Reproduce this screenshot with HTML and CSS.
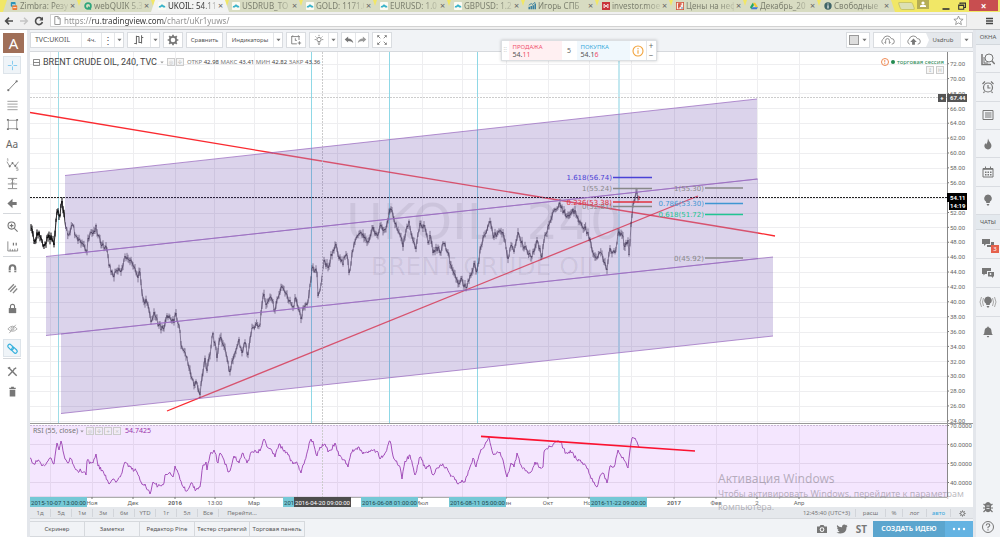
FILE: index.html
```html
<!DOCTYPE html>
<html lang="ru">
<head>
<meta charset="utf-8">
<title>UKOIL: 54.11</title>
<link rel="stylesheet" href="styles.css">
</head>
<body>
<svg class="defs" aria-hidden="true">
  <symbol id="cloud" viewBox="0 0 10 10"><rect width="10" height="10" rx="1" fill="#fbfbf3"/><path d="M1 7a2 2 0 0 1 2-2.4A2.2 2.2 0 0 1 7 4.300a2 2 0 0 1 2 2.700H6.500L5 5.500 3.500 7z" fill="#37b2c9"/></symbol>
  <symbol id="caret" viewBox="0 0 6 4"><path d="M.5.5h5L3 3.500z" fill="#777"/></symbol>
  <symbol id="bulb" viewBox="0 0 14 14"><path d="M7 1.500a3.800 3.800 0 0 1 2 7L8.700 10H5.300L5 8.500a3.800 3.800 0 0 1 2-7zM5.600 11h2.800l-.6 1.600H6.200z"/></symbol>
  <symbol id="gear" viewBox="0 0 14 14"><circle cx="7" cy="7" r="3.700" fill="none" stroke="currentColor" stroke-width="2"/><path d="M7 .8v2.400M7 10.800v2.400M.8 7h2.400M10.800 7h2.400M2.600 2.600l1.700 1.700M9.700 9.700l1.700 1.700M2.600 11.400l1.700-1.700M9.700 4.300l1.700-1.700" stroke="currentColor" stroke-width="2"/></symbol>
  <symbol id="chat" viewBox="0 0 14 14"><path d="M1 2h8v5H5L3 9V7H1z"/><path d="M10 5h3v5h-1v2l-2-2H6V8h4z"/></symbol>
</svg>

<header class="browser">
  <nav class="tabs">
    <a class="tab" href="#"><svg class="fav" viewBox="0 0 10 10"><rect width="6" height="6" x="1" rx="1" fill="#2b94b8"/><rect width="6" height="6" x="3" y="4" rx="1" fill="#ee7a33"/><path d="M2.500 3.500h4M4 7h4" stroke="#fff"/></svg><span class="name">Zimbra: Резу</span><span class="x">×</span></a>
    <a class="tab" href="#"><svg class="fav" viewBox="0 0 10 10"><circle cx="5" cy="5" r="3.600" fill="none" stroke="#2fa57c" stroke-width="2.200"/><path d="M5 6l3.500 3.500" stroke="#2fa57c" stroke-width="2"/></svg><span class="name">webQUIK 5.3</span><span class="x">×</span></a>
    <a class="tab on" href="#"><svg class="fav"><use href="#cloud"/></svg><span class="name">UKOIL: 54.11</span><span class="x">×</span></a>
    <a class="tab" href="#"><svg class="fav"><use href="#cloud"/></svg><span class="name">USDRUB_TO</span><span class="x">×</span></a>
    <a class="tab" href="#"><svg class="fav"><use href="#cloud"/></svg><span class="name">GOLD: 1171.0</span><span class="x">×</span></a>
    <a class="tab" href="#"><svg class="fav"><use href="#cloud"/></svg><span class="name">EURUSD: 1.0</span><span class="x">×</span></a>
    <a class="tab" href="#"><svg class="fav"><use href="#cloud"/></svg><span class="name">GBPUSD: 1.2</span><span class="x">×</span></a>
    <a class="tab" href="#"><svg class="fav" viewBox="0 0 10 10"><path d="M1.500 9V6M4 9V5M6.500 9V4M9 9V2" stroke="#24729a" stroke-width="1.700"/><path d="M1 4l3-2 2 1 3-3" stroke="#24729a" fill="none"/></svg><span class="name">Игорь СПБ</span><span class="x">×</span></a>
    <a class="tab" href="#"><svg class="fav" viewBox="0 0 10 10"><rect width="10" height="10" fill="#c93538"/><path d="M2.500 2.500v5M7.500 2.500v5M2.500 3l5 4M7.500 3l-5 4" stroke="#fff"/></svg><span class="name">investor.moe</span><span class="x">×</span></a>
    <a class="tab" href="#"><svg class="fav" viewBox="0 0 10 10"><rect x=".5" y=".5" width="9" height="9" fill="#f8eee6" stroke="#d2563c"/><path d="M3.500 8V2.500H7M3.500 5H6" stroke="#d2402c" stroke-width="1.600" fill="none"/><circle cx="7.500" cy="7.500" r="1" fill="#3978b5"/></svg><span class="name">Цены на неф</span><span class="x">×</span></a>
    <a class="tab" href="#"><svg class="fav" viewBox="0 0 10 10"><path d="M3.500 1h3L10 6.500H7z" fill="#f4c832"/><path d="M3.500 1L5 3.700 1.600 9 0 6.500z" fill="#22a565"/><path d="M3.200 6.500H10L8.400 9H1.600z" fill="#3f78d8"/></svg><span class="name">Декабрь_20</span><span class="x">×</span></a>
    <a class="tab" href="#"><svg class="fav" viewBox="0 0 10 10"><circle cx="5" cy="5" r="4.600" fill="#3f6468"/><path d="M5 4v4M5 2v1.200" stroke="#fff" stroke-width="1.400"/></svg><span class="name">Свободные</span><span class="x">×</span></a>
    <button class="newtab" aria-label="Новая вкладка"></button>
    <div class="win">
      <button class="user" aria-label="Профиль"><svg viewBox="0 0 12 9"><circle cx="6" cy="3" r="1.600" fill="#fff"/><path d="M3 7V5.500q3-1.500 6 0V7z" fill="#fff"/></svg></button>
      <button aria-label="Свернуть"><svg viewBox="0 0 8 10"><path d="M.5 8h7" stroke="#333" stroke-width="1.600"/></svg></button>
      <button aria-label="Развернуть"><svg viewBox="0 0 8 10"><path d="M2 3V2h5.500v4.500H6M.7 4h5v4.200h-5zM.7 4.500h5M2 2.300h5.500" stroke="#333" fill="none" stroke-width="1.100"/></svg></button>
      <button class="close" aria-label="Закрыть">×</button>
    </div>
  </nav>
  <div class="bar">
    <button aria-label="Назад"><svg viewBox="0 0 10 10"><path d="M9 5H2M5 1.700L1.700 5 5 8.300" fill="none" stroke="#4c4c4c" stroke-width="1.700"/></svg></button>
    <button aria-label="Вперёд"><svg viewBox="0 0 10 10"><path d="M1 5h7M5 1.700L8.300 5 5 8.300" fill="none" stroke="#c4c4c4" stroke-width="1.500"/></svg></button>
    <button aria-label="Обновить"><svg viewBox="0 0 10 10"><path d="M8 3.200A3.500 3.500 0 1 0 8.400 6" fill="none" stroke="#4c4c4c" stroke-width="1.600"/><path d="M9 .8v3.700H5.300z" fill="#4c4c4c"/></svg></button>
    <label class="omni"><svg viewBox="0 0 7 9"><path d="M.8.5h3.400l2 2v6H.8zM4 .5v2.300h2.200" fill="none" stroke="#999"/></svg><input class="url" aria-label="Адрес" value="https://ru.tradingview.com/chart/uKr1yuws/"><svg class="star" viewBox="0 0 11 11"><path d="M5.500 1l1.300 3 3.300.3-2.500 2.100.8 3.200-2.900-1.700-2.900 1.700.8-3.200L.9 4.300 4.200 4z" fill="none" stroke="#888" stroke-width=".8"/></svg></label>
    <button class="menu" aria-label="Меню"><svg viewBox="0 0 8 8"><path d="M0 1.500h7M0 4h7M0 6.500h7" stroke="#444" stroke-width="1.600"/></svg></button>
  </div>
</header>

<div class="app">
  <aside class="left">
    <button class="logo">A</button>
    <button class="tool act"><svg viewBox="0 0 14 14"><path d="M7 2v4M7 8v4M2 7h4M8 7h4" stroke="#7cc7ee"/></svg></button>
    <div class="set seven">
      <button class="tool"><svg viewBox="0 0 14 14"><path d="M3 11.500l8-8.500" stroke="#777"/><circle cx="2.500" cy="12" r="1.200"/><circle cx="11.500" cy="2.500" r="1.200"/></svg></button>
      <button class="tool"><svg viewBox="0 0 14 14"><path d="M1.500 2.500h11M1.500 5.500h11M1.500 8.500h11M1.500 11.500h11" stroke="#999"/></svg></button>
      <button class="tool"><svg viewBox="0 0 14 14"><path d="M2.500 2.500h9v9h-9z" fill="none" stroke="#999"/><path d="M1 1h2v2H1zM11 1h2v2h-2zM1 11h2v2H1zM11 11h2v2h-2z"/></svg></button>
      <button class="tool aa">Aa</button>
      <button class="tool"><svg viewBox="0 0 14 14"><path d="M1 4l3 5 3-3.500 3 3L13.500 4" fill="none" stroke="#777" stroke-width=".8"/><path d="M1 1.200l1-.5V3.500M13 10h-2v1.500h2v1.800h-2" fill="none" stroke="#888" stroke-width=".7"/><circle cx="4" cy="9" r="1.100"/><circle cx="7" cy="5.500" r="1.100"/><circle cx="10" cy="8.500" r="1.100"/></svg></button>
      <button class="tool"><svg viewBox="0 0 14 14"><path d="M2 1.500h10M2 7.500h10M2 12.500h10M7 2v10M5.500 3.500L7 2l1.500 1.500M5.500 6L7 7.500 8.500 6" fill="none" stroke="#888"/></svg></button>
      <button class="tool"><svg viewBox="0 0 14 14"><path d="M1.500 7L7 1.800V5.400h4.500v3.200H7v3.600z"/></svg></button>
    </div>
    <div class="set two">
      <button class="tool"><svg viewBox="0 0 14 14"><circle cx="6" cy="6" r="3.800" fill="none" stroke="#777" stroke-width="1.200"/><path d="M9 9l3.500 3.500M4 6h4M6 4v4" stroke="#777" stroke-width="1.200"/></svg></button>
      <button class="tool"><svg viewBox="0 0 14 14"><path d="M2 1.500v10.300h10.500V9M4.500 12V9.500M7 12v-2M9.500 12V9.500" fill="none" stroke="#888"/><path d="M8 3v3M11 3v3" stroke="#777" stroke-width="1.300"/></svg></button>
    </div>
    <div class="set five">
      <button class="tool"><svg viewBox="0 0 14 14"><path d="M4 11V6.500a3 3 0 0 1 6 0V11" fill="none" stroke="#777" stroke-width="2.200"/><path d="M2.500 9.300h3M8.500 9.300h3" stroke="#fff" stroke-width=".7"/></svg></button>
      <button class="tool"><svg viewBox="0 0 14 14"><path d="M2.500 8.500l6-6M4.500 10.500l6-6.500M7.500 12l4.500-5" stroke="#888" stroke-width="1.500"/></svg></button>
      <button class="tool"><svg viewBox="0 0 14 14"><path d="M3 6.500h8V12H3z"/><path d="M4.800 6.500V4.700a2.200 2.200 0 0 1 4.400 0v1.800" fill="none" stroke="#777" stroke-width="1.200"/></svg></button>
      <button class="tool"><svg viewBox="0 0 14 14"><path d="M2 7.500q5-6 10 0-5 5-10 0zM3.500 12l7-9" fill="none" stroke="#aaa"/><circle cx="7" cy="7.200" r="1.600" fill="none" stroke="#aaa"/></svg></button>
      <button class="tool act"><svg viewBox="0 0 14 14"><rect x="1.500" y="3.500" width="7" height="4" rx="2" transform="rotate(45 5 5.500)" fill="none" stroke="#35b1dd" stroke-width="1.300"/><rect x="5.500" y="7" width="7" height="4" rx="2" transform="rotate(45 9 9)" fill="none" stroke="#35b1dd" stroke-width="1.300"/></svg></button>
    </div>
    <div class="set two last">
      <button class="tool"><svg viewBox="0 0 14 14"><path d="M3 3l8.500 8.500M2.500 11.500l6-6M8 5l3-2M2 3.500l2.500-1" stroke="#777" stroke-width="1.500"/></svg></button>
      <button class="tool"><svg viewBox="0 0 14 14"><path d="M4 5h6v7.500H4zM3.500 3h2V2h3v1h2v1.300h-7z"/></svg></button>
    </div>
  </aside>

  <main class="center">
    <div class="top">
      <div class="grp sym"><button class="w-sym">TVC:UKOIL</button><button class="w-int">4ч.</button><button class="w-dots">⋮</button><button class="w-car"><svg class="car"><use href="#caret"/></svg></button></div>
      <div class="grp"><button class="w-bars"><svg viewBox="0 0 14 14"><path d="M4 2v10M4 11H1.500M4 3h3M10 1.500V11M10 4h2M7 3v7h3" fill="none" stroke="#666" stroke-width="1.200"/></svg></button><button class="w-car"><svg class="car"><use href="#caret"/></svg></button></div>
      <div class="grp"><button class="w-ico"><svg class="g"><use href="#gear"/></svg></button></div>
      <div class="grp"><button class="w-cmp">Сравнить</button></div>
      <div class="grp"><button class="w-ind">Индикаторы</button><button class="w-car"><svg class="car"><use href="#caret"/></svg></button></div>
      <div class="grp"><button class="w-ico"><svg viewBox="0 0 14 14"><path d="M10.500 7V3H2v8.500h6M1.500 3.500l2-2M9.500 1.500l2 2M6.200 5v2.500H8M11 8.500v4M9 10.500h4" fill="none" stroke="#777"/></svg></button></div>
      <div class="grp"><button class="w-ico"><svg viewBox="0 0 14 14"><circle cx="7" cy="6.500" r="2.500" fill="none" stroke="#777"/><path d="M5.500 10.500h3M6 12h2M7 1v1.500M2 6.500h1.300M10.700 6.500H12M3 3l1 1M11 3l-1 1" stroke="#777"/></svg></button><button class="w-car"><svg class="car"><use href="#caret"/></svg></button></div>
      <div class="grp"><button class="w-undo"><svg viewBox="0 0 14 14"><path d="M2 6.500L6 3v2.300q5 .2 6 5.200-2-2.500-6-2.400V10z"/></svg></button><button class="w-undo"><svg viewBox="0 0 14 14"><path d="M12 6.500L8 3v2.300q-5 .2-6 5.200 2-2.500 6-2.400V10z" fill="#999"/></svg></button></div>
      <div class="grp"><button class="w-ico"><svg viewBox="0 0 14 14"><path d="M1.500 4.500v-3h3zM9.500 1.500h3v3zM1.500 9.500v3h3zM12.500 9.500v3h-3z"/><path d="M2 2l3 3M12 2L9 5M2 12l3-3M12 12L9 9" stroke="#777"/></svg></button></div>
      <span class="fill"></span>
      <div class="grp"><button class="w-box"><svg class="sq" viewBox="0 0 10 10"><rect x=".5" y=".5" width="9" height="9" fill="#ddd" stroke="#999"/></svg><svg class="car"><use href="#caret"/></svg></button></div>
      <div class="grp">
        <button class="w-cl"><svg class="cl" viewBox="0 0 16 12"><path d="M4 10.500A3 3 0 0 1 3.500 5 4.500 4.500 0 0 1 12 4.500a3 3 0 0 1 .5 6M6 9.500V6.500M10 9.500V6.500M6 6.500a2 2 0 0 1 4 0M4.800 8.500L6 9.800M11.200 8.500L10 9.800" fill="none" stroke="#888"/></svg></button>
        <button class="w-cl"><svg class="cl" viewBox="0 0 16 12"><path d="M4 10.500A3 3 0 0 1 3.500 5 4.500 4.500 0 0 1 12 4.500a3 3 0 0 1 .5 6" fill="none" stroke="#888"/><path d="M8 4.500l3.500 3.500H9.500v3h-3V8h-2z"/></svg></button>
        <button class="w-usd"><span>Usdrub</span></button><button class="w-cr"><svg class="car"><use href="#caret"/></svg></button>
      </div>
    </div>

    <section class="chart">
      <svg id="plot" viewBox="30 52 943 455" role="img" aria-label="BRENT CRUDE OIL, 240"></svg>
      <div class="legend"><svg viewBox="0 0 8 8"><path d="M.5.500h7v7h-7zM.5 4h7" fill="none" stroke="#777"/></svg><h1>BRENT CRUDE OIL, 240, TVC</h1><svg class="car"><use href="#caret"/></svg><i class="mini">◎</i><i class="mini">✣</i>
        <p>ОТКР <b>42.98</b> МАКС <b>43.41</b> МИН <b>42.82</b> ЗАКР <b>43.36</b></p></div>
      <div class="session"><p><i class="warn">!</i><i class="dot"></i>торговая сессия</p><div><i class="mini">↕</i><i class="mini">H</i></div></div>
      <div class="legend rsi"><span>RSI (55, close)</span><svg class="car"><use href="#caret"/></svg><i class="mini">◎</i><i class="mini">✣</i><i class="mini">+</i><i class="mini">×</i><em>54.7425</em></div>
      <div class="trade">
        <span class="grip">⠿</span>
        <button class="sell">ПРОДАЖА<span>54.<b>11</b></span></button>
        <span class="spread">5</span>
        <button class="buy">ПОКУПКА<span>54.1<b>6</b></span></button>
        <span class="info"><svg viewBox="0 0 12 12"><circle cx="6" cy="6" r="5" fill="none" stroke="#f2a33c" stroke-width="1.100"/><path d="M6 5.300v3.500M6 3v1.200" stroke="#f2a33c" stroke-width="1.100"/></svg></span>
        <span class="step"><button>+</button><button>−</button></span>
      </div>
      <div class="activate"><h2>Активация Windows</h2><p>Чтобы активировать Windows, перейдите к параметрам компьютера.</p></div>
    </section>

    <div class="ranges">
      <button>1д</button><button>5д</button><button>1м</button><button>3м</button><button>6м</button><button>YTD</button><button>1г</button><button>5л</button><button>Все</button><button class="go">Перейти...</button>
      <span class="fill"></span>
      <button class="clock">12:45:40 (UTC+3)</button><button class="mid">расш</button><button class="pc">%</button><button class="log">лог</button><button class="log auto">авто</button><button class="log"><svg><use href="#gear"/></svg></button>
    </div>

    <footer class="bottom">
      <button>Скринер</button><button>Заметки</button><button>Редактор Pine</button><button>Тестер стратегий</button><button>Торговая панель</button>
      <span class="fill"></span>
      <a href="#" aria-label="Снимок"><svg viewBox="0 0 12 12"><path d="M1 3.500h2.500L4.500 2h3l1 1.500H11V10H1z"/><circle cx="6" cy="6.600" r="2.300" fill="#fff"/><circle cx="6" cy="6.600" r="1.300"/></svg></a>
      <a href="#" aria-label="Twitter"><svg viewBox="0 0 12 12"><path d="M1 2q2.200 2.300 5 2.200Q6 1.500 8.300 1.500q1 0 1.600.7L11.300 1.800l-.8 1.200L11.700 3l-1.100 1.100Q10.500 10.500 4.500 10.500 2 10.500.5 9.500q2 0 3.200-1Q2 8.200 1.700 7h1Q1 6.300 1 4.600l1 .3Q.3 3.500 1 2z"/></svg></a>
      <a class="st" href="#">ST</a>
      <button class="idea">СОЗДАТЬ ИДЕЮ</button><button class="more" aria-label="Ещё"><svg viewBox="0 0 14 4"><circle cx="2" cy="2" r="1.200"/><circle cx="7" cy="2" r="1.200"/><circle cx="12" cy="2" r="1.200"/></svg></button>
    </footer>
  </main>

  <aside class="right">
    <h3>ОКНА</h3>
    <div class="set six">
      <button class="tool"><svg viewBox="0 0 14 14"><path d="M1 2v10.500h9" fill="none" stroke="#777" stroke-width="1.500"/><path d="M3 5v6h4" fill="none" stroke="#777"/><circle cx="8" cy="6" r="4" fill="#f4f6f8" stroke="#777"/><path d="M11 9l2.700 3" stroke="#777" stroke-width="1.400"/></svg></button>
      <button class="tool"><svg viewBox="0 0 14 14"><circle cx="7" cy="7.500" r="4.500" fill="none" stroke="#777" stroke-width="1.200"/><path d="M7 5v3h2.500M1.500 4l2.500-2.500M12.500 4L10 1.500M3.500 11.500l-1 1.500M10.500 11.500l1 1.500" fill="none" stroke="#777" stroke-width="1.200"/></svg></button>
      <button class="tool"><svg viewBox="0 0 14 14"><path d="M2 2.500h10v9H2z" fill="none" stroke="#777"/><path d="M4 5h6.500M4 7h6.500M4 9h6.500" stroke="#777"/></svg></button>
      <button class="tool"><svg viewBox="0 0 14 14"><path d="M7 1.500q.5 2 2.500 4.500 2 3-.2 5.500-2.600 2-5-.2Q2.300 9 4.500 6l.6 1.500Q7 5 7 1.500z"/></svg></button>
      <button class="tool"><svg viewBox="0 0 14 14"><path d="M2 3.500h10v8.500H2z" fill="none" stroke="#777"/><path d="M2 4h10" stroke="#777" stroke-width="1.600"/><path d="M4 7.200h6.500M4 9.700h6.500" stroke="#777" stroke-width="1.600" stroke-dasharray="1.500 1"/><path d="M4.500 1.500v2M9.500 1.500v2" stroke="#777"/></svg></button>
      <button class="tool"><svg><use href="#bulb"/></svg></button>
    </div>
    <h3>ЧАТЫ</h3>
    <div class="set four">
      <button class="tool badge"><svg><use href="#chat"/></svg><b>3</b></button>
      <button class="tool"><svg viewBox="0 0 14 14"><path d="M1 2h9v3H6v3H4L2.500 9.500V8H1z"/><path d="M7 6h6v4.500h-1V12l-1.600-1.500H7z"/><circle cx="9.500" cy="8" r=".9" fill="#f1f3f6"/></svg></button>
      <button class="tool"><svg class="wide" viewBox="-3 0 20 14"><use href="#bulb" width="14" height="14"/><path d="M2.500 3q-2 4 0 8M.5 2q-3 5 0 10M11.500 3q2 4 0 8M13.500 2q3 5 0 10" fill="none" stroke="#aaa"/></svg></button>
      <button class="tool"><svg viewBox="0 0 14 14"><path d="M7 1.500q.8 0 .8 1 2.700.7 2.700 4 0 2.500 1.500 3.500H2q1.500-1 1.500-3.500 0-3.300 2.700-4 0-1 .8-1zM5.800 11h2.400q-.2 1.400-1.200 1.400T5.800 11z"/></svg></button>
    </div>
    <span class="fill"></span>
    <div class="set help">
      <button class="tool"><svg viewBox="0 0 14 14"><path d="M4 4q3-4 6 0v6.500q-3 3.500-6 0z"/><path d="M2.500 4l2 1.500M11.500 4l-2 1.500M2 8h10M2.500 12l2-2M11.500 12l-2-2" stroke="#777" stroke-width="1.200"/><path d="M5.500 6h3M5.500 8.500h3" stroke="#f1f3f6" stroke-width=".8"/></svg></button>
      <button class="tool"><svg viewBox="0 0 14 14"><circle cx="7" cy="7" r="5.500" fill="none" stroke="#777"/><path d="M5.200 5.500q.2-1.700 1.800-1.700 1.800 0 1.800 1.500Q8.800 6.300 7 7.200v1M7 9.200v1.200" fill="none" stroke="#777" stroke-width="1.100"/></svg></button>
    </div>
  </aside>
</div>
<script src="chart.js"></script>
</body>
</html>
```
FILE: styles.css
```css
* { box-sizing: border-box; }
html, body { height: 100%; }
body { margin: 0; display: flex; flex-direction: column; background: #f1f3f6; color: #666; font: 6px/8px "Noto Sans", "Open Sans", sans-serif; }
button, input { font: inherit; color: inherit; background: none; border: 0; padding: 0; margin: 0; }
a { color: inherit; text-decoration: none; }
h1, h2, h3, p { margin: 0; font-weight: 400; }
i, em { font-style: normal; }
svg { display: block; fill: #777; }
button { display: flex; align-items: center; justify-content: center; white-space: nowrap; }
.defs { position: absolute; width: 0; height: 0; }
.fill { flex: 1; }
.car { width: 5px; height: 4px; }

/* browser frame */
.tabs { display: flex; height: 12px; padding-left: 3px; background: #f1e766; }
.tab { flex: 0 1 78px; min-width: 0; margin-right: -4px; display: flex; align-items: center; gap: 2px; padding: 0 5px 1px 7px; height: 12px; background: #d8dcc2; clip-path: polygon(0 100%, 4px 0, 74px 0, 78px 100%); font-size: 8px; line-height: 11px; color: #7d8070; }
.tab.on { background: #f2f3f2; color: #333; z-index: 1; }
.fav { flex: none; width: 8px; height: 8px; }
.name { flex: 1; min-width: 0; overflow: hidden; white-space: nowrap; -webkit-mask-image: linear-gradient(90deg, #000 70%, rgba(0, 0, 0, .2)); mask-image: linear-gradient(90deg, #000 70%, rgba(0, 0, 0, .2)); }
.x { width: 6px; font-size: 9px; color: #666; }
.newtab { flex: none; width: 15px; height: 8px; margin: 2px 0 0 8px; background: #dce0b4; border: 1px solid #c9c66a; border-radius: 2px; transform: skewX(20deg); }
.win { flex: 1; display: flex; justify-content: flex-end; gap: 8px; padding-right: 2px; }
.win svg { width: 8px; height: 10px; }
.win .user { width: 12px; height: 9px; margin-right: 5px; background: #b5ad54; }
.win .user svg { width: 12px; height: 9px; }
.win .close { width: 29px; height: 11px; margin-left: -5px; background: #c84e50; color: #fff; font-size: 10px; font-weight: 700; }
.bar { display: flex; align-items: center; gap: 5px; height: 18px; padding: 0 4px; background: #f0f0f0; border-bottom: 1px solid #c4c6c9; }
.bar > button svg { width: 10px; height: 10px; }
.bar .menu { margin-left: 14px; margin-right: 2px; }
.bar .menu svg { width: 8px; height: 8px; }
.omni { flex: 1; display: flex; align-items: center; gap: 3px; height: 13px; margin-left: 1px; padding: 0 2px 0 3px; background: #fff; border: 1px solid #d2d2d2; }
.omni svg { width: 7px; height: 9px; }
.omni .star { width: 11px; height: 11px; }
.url { flex: 1; height: 11px; font-size: 8px; line-height: 11px; color: transparent; background: linear-gradient(90deg, #8a8a8a 27px, #333 27px, #333 101px, #8a8a8a 101px); -webkit-background-clip: text; background-clip: text; }

/* application */
.app { flex: 1; display: flex; align-items: stretch; }
.left { width: 30px; padding: 3px 6px 0 3px; background: #fff; border-right: 3px solid #e3e6eb; }
.logo { width: 21px; height: 20px; background: #a06f58; color: #fff; font-size: 15px; line-height: 20px; }
.tool { width: 100%; }
.tool svg { width: 13px; height: 13px; }
.left .act { height: 18px; background: #eff4f8; border: 1px solid #dde4ea; }
.left > .act { margin: 3px 0 2px; }
.set { display: grid; grid-auto-rows: 1fr; align-items: center; }
.left .set { border-bottom: 1px solid #d5d8dc; margin-bottom: 2px; }
.left .last { border: 0; }
.seven { height: 138px; }
.two { height: 41px; }
.five { height: 100px; }
.aa { font-size: 10px; line-height: 12px; }
.center { flex: 1; min-width: 0; display: flex; flex-direction: column; }
.top { display: flex; align-items: center; gap: 3px; height: 22px; padding-bottom: 1px; border-bottom: 1px solid #d6d9dd; }
.grp { display: flex; height: 16px; background: #fff; border: 1px solid #d9dce0; color: #555; }
.grp button + button { border-left: 1px solid #e4e6e9; }
.grp svg { flex: none; width: 12px; height: 12px; color: #777; }
.grp .car { width: 5px; height: 4px; }
.grp .sq { width: 10px; height: 10px; }
.w-sym { width: 50px; font-size: 7px; padding-right: 7px; }
.w-int { width: 20px; }
.w-dots { width: 13px; font-size: 10px; }
.w-car { width: 9px; }
.w-bars { width: 22px; }
.w-box { width: 22px; gap: 3px; }
.w-ico { width: 18px; }
.w-cmp { width: 35px; }
.w-ind { width: 46px; }
.w-undo { width: 13px; }
.w-cl { width: 26px; }
.grp .cl { width: 15px; height: 12px; }
.grp .w-usd { width: 34px; border: 0; background: #fff; }
.w-usd span { width: 100%; height: 100%; line-height: 14px; background: #e5e8ec; clip-path: polygon(0 0, 100% 0, 100% 100%, 0 100%, 3px 50%); }
.w-cr { width: 12px; }

.chart { position: relative; background: #fff; }
#plot { width: 100%; height: auto; }
#plot text { font-family: Roboto, "Noto Sans", sans-serif; font-size: 6px; fill: #666; }
#plot .mark { font-family: "DejaVu Sans", sans-serif; fill: #000; fill-opacity: .07; }
#plot .m1 { font-size: 50px; }
#plot .m2 { font-size: 25px; }
#plot .fib { font-family: "DejaVu Sans", sans-serif; font-size: 7px; text-anchor: end; }
#plot .mid { text-anchor: middle; }
#plot .year { font-weight: 700; }
#plot .inv { fill: #fff; font-weight: 700; }
#plot .stamp { fill: #24454c; text-anchor: middle; }
#plot .stamp.pale { fill: #fff; }
.legend { position: absolute; left: 3px; top: 5px; display: flex; align-items: center; gap: 3px; }
.legend h1 { font: 9px/10px Roboto, sans-serif; color: #444; }
.legend svg { width: 7px; height: 7px; }
.legend .car { width: 4px; height: 3px; opacity: .7; }
.legend p { color: #777; white-space: nowrap; }
.legend b { color: #444; font-weight: 400; }
.mini { width: 8px; height: 8px; border: 1px solid #ccc; color: #bbb; font: 5px/6px "DejaVu Sans", sans-serif; text-align: center; background: rgba(240, 240, 240, .6); }
.legend .mini + .mini { margin-left: -2px; }
.legend.rsi { top: 375px; gap: 2px; color: #777; font-size: 7px; }
.legend.rsi .mini + .mini { margin-left: -1px; }
.rsi em { color: #9a35ad; margin-left: 2px; }
.session { position: absolute; right: 29px; top: 6px; display: flex; flex-direction: column; align-items: flex-end; color: #2b8a57; }
.session p, .session div { display: flex; align-items: center; gap: 2px; }
.warn { width: 8px; height: 8px; border: 1px solid #ef8a55; border-radius: 50%; color: #ef8a55; font-weight: 700; line-height: 6px; text-align: center; }
.dot { width: 4px; height: 4px; border-radius: 50%; background: #238a50; }
.trade { position: absolute; left: 50%; top: -12px; display: flex; width: 156px; height: 21px; margin-left: -1px; background: #fff; border: 1px solid #dcdfe2; box-shadow: 0 0 3px rgba(0, 0, 0, .2); }
.grip { width: 7px; line-height: 19px; color: #ccc; text-align: center; }
.sell, .buy { width: 53px; flex-direction: column; align-items: flex-start; padding-left: 4px; color: #f0506e; background: #fff0f2; }
.buy { color: #32a8dc; background: #f0f8fd; }
.sell span, .buy span { font-size: 7px; line-height: 8px; color: #555; }
.trade b { font-weight: 400; color: #f0506e; }
.spread { width: 15px; font-size: 7px; line-height: 19px; text-align: center; }
.info { flex: 1; display: flex; align-items: center; justify-content: center; }
.info svg { width: 12px; height: 12px; }
.step { width: 10px; border-left: 1px solid #e5e7ea; }
.step button { width: 100%; height: 9px; font-size: 8px; }
.activate { position: absolute; left: 688px; top: 418px; width: 250px; color: rgba(120, 115, 125, .5); font-size: 9px; line-height: 13px; }
.activate h2 { font-size: 12px; line-height: 17px; }

.ranges { display: flex; height: 12px; background: #e5e8ec; border-bottom: 1px solid #d6d9dd; color: #777; }
.ranges button { width: 21px; border-right: 1px solid #d2d5da; height: 8px; margin-top: 2px; }
.ranges .go { width: 46px; border: 0; }
.ranges .clock { width: 58px; }
.ranges .mid { width: 30px; }
.ranges .pc { width: 17px; }
.ranges .log { width: 24px; }
.ranges .log:last-child { width: 22px; border: 0; }
.ranges .auto { color: #39a7dc; }
.ranges svg { width: 7px; height: 7px; color: #777; }
.bottom { flex: 1; display: flex; align-items: flex-end; padding-top: 2px; min-height: 18px; }
.bottom > button { width: 55px; height: 100%; border: 1px solid #d6d9dd; border-left-width: 0; color: #555; }
.bottom a { display: flex; align-items: center; height: 100%; margin-right: 8px; }
.bottom svg { width: 12px; height: 12px; }
.bottom .st { font: 700 10px/12px "Open Sans", sans-serif; color: #777; margin-right: 6px; }
.bottom .idea { width: 72px; background: #5ba5ce; color: #fff; border: 0; font-size: 7px; font-weight: 600; }
.bottom .more { width: 28px; background: #64b3e2; border: 0; }
.bottom .more svg { width: 14px; height: 4px; fill: #fff; }

.right { width: 27px; display: flex; flex-direction: column; border-left: 3px solid #e3e6eb; }
.right h3 { height: 15px; font-size: 6px; line-height: 15px; text-align: center; background: #e4e9ee; border-bottom: 1px solid #d3d8dd; color: #555; }
.right .tool { height: 100%; border-bottom: 1px solid #d9dce1; }
.right .tool svg { width: 14px; height: 14px; }
.right .tool .wide { width: 20px; }
.six { height: 170px; }
.four { height: 116px; }
.four .tool:last-child { border: 0; }
.badge { position: relative; }
.badge b { position: absolute; right: 1px; bottom: 5px; width: 8px; height: 8px; background: #e5614c; color: #fff; font-weight: 400; }
.help { height: 40px; }
.right .help .tool { border: 0; }
```
FILE: chart.js
```js
const plot = document.getElementById('plot');
function add(tag, attrs, text) {
  const el = document.createElementNS('http://www.w3.org/2000/svg', tag);
  for (const k in attrs) el.setAttribute(k, attrs[k]);
  if (text !== undefined) el.textContent = text;
  plot.appendChild(el);
}
const line = (x1, y1, x2, y2, stroke, width = 1, more = {}) =>
  add('line', { x1, y1, x2, y2, stroke, 'stroke-width': width, ...more });
const rect = (x, y, width, height, fill, more = {}) => add('rect', { x, y, width, height, fill, ...more });
const text = (x, y, s, cls = '', more = {}) => add('text', { x, y, class: cls, ...more }, s);

let seed = 17;
const rnd = () => (seed = (seed * 16807) % 2147483647) / 2147483647;

const price = [31,228,34,241,39,232,44,246,49,235,54,245,57,212,60,216,62,201,64,213,65.5,226,69,235,72.5,225,76,236,80,240,84,245,87,251,88,238,92,233,95,232,96,225,98,236,102,246,107,250,109,266,113,276,117,271,121,272,125,256,130,261,135,268,138,278,140,272,143,298,147,303,151,322,154,312,159,325,163,329,166,318,171,320,174,323,176,313,179,325,181,345,185,352,189,368,194,386,196,381,200,395,203,372,205,358,207,371,210,355,213,333,217,358,220,338,225,348,230,372,233,360,236,350,239,339,242,353,245,342,248,355,252,328,260,325,262,305,264,294,266,305,271,297,275,311,278,298,281,287,285,293,290,300,293,307,296,298,301,319,304,307,307,305,310,285,312,268,317,273,318,296,322,278,324,260,328,268,333,250,336,244,338,255,343,265,344,257,347,255,349,273,353,250,357,236,361,232,364,238,368,242,373,227,377,235,381,225,385,230,388,220,391,209,395,224,400,235,403,247,407,226,409,221,412,237,416,249,420,223,425,228,428,243,430,235,433,253,438,247,440,253,444,244,448,252,451,265,455,274,459,284,461,278,466,288,470,275,474,263,477,271,480,250,484,236,490,221,493,235,498,232,503,232,506,248,508,259,511,245,514,252,518,232,521,243,525,246,531,257,535,248,537,240,542,257,545,235,550,222,555,209,560,203,563,213,568,215,573,209,577,217,582,226,588,232,592,250,596,258,602,254,607,270,610,248,613,252,615,253,618,233,622,235,625,247,628,240,629,255,631,225,633,205,636,192,639,200];
const rsi = [30,458,34,464,38,460,42,466,47,462,51,458,54,464,57,443,59,450,61,441,64,455,67,462,71,459,76,470,81,471,86,475,87,461,93,463,96,454,98,466,103,471,109,484,113,479,117,481,122,473,125,462,130,467,137,472,141,482,145,484,150,494,153,482,158,486,164,483,165,475,169,473,173,477,175,466,179,475,182,485,187,491,191,483,196,490,200,487,203,465,206,462,207,470,210,455,214,450,218,463,220,453,224,460,228,472,230,471,234,456,239,463,243,453,247,463,252,452,260,451,264,439,267,447,271,449,275,457,279,444,283,450,288,455,293,464,296,462,301,473,305,460,310,441,313,441,317,456,320,447,325,444,328,452,331,450,335,443,339,456,344,460,348,467,351,453,358,447,362,452,368,453,372,450,377,451,380,459,385,453,390,441,394,459,400,467,402,479,405,461,410,455,415,475,420,457,426,469,430,466,433,475,437,468,441,465,446,467,450,474,455,480,458,484,462,480,465,482,470,467,473,458,476,467,480,453,486,442,489,437,493,454,500,452,503,460,507,477,511,463,514,467,517,453,521,465,527,471,531,472,535,462,540,467,543,467,544,452,550,447,556,441,560,442,566,453,572,452,577,460,582,462,586,466,590,475,594,482,597,487,600,476,604,474,607,483,610,466,614,467,618,450,621,456,624,460,628,468,630,450,632,438,635,438,638,445,640,447];
function sample(pts, step, jitter) {
  const out = [];
  for (let i = 0; i + 3 < pts.length; i += 2) {
    const [x1, y1, x2, y2] = pts.slice(i, i + 4);
    const n = Math.max(1, Math.round((x2 - x1) / step));
    for (let k = 0; k < n; k++)
      out.push([x1 + (x2 - x1) * k / n, y1 + (y2 - y1) * k / n + (k ? (rnd() - .5) * jitter : 0)]);
  }
  return out;
}

const months = [50.5,92.5,133.5,175.5,214.5,254.5,297.5,337.5,379.5,422.5,462.5,506.5,548.5,589.5,631.5,674.5,716.5,757.5,799.5];
const events = [[58.5, 1, '#9fdde7'], [311.5, 1, '#8fd8e6'], [389.5, 1, '#8fd8e6'], [477.5, 1, '#8fd8e6'], [619, 2, '#c3e8f0']];
const py = p => 63.7 + (72 - p) * 7.44;

/* panes and grid */
rect(30, 425, 917, 72, '#f4e6fe');
for (let p = 72; p >= 24; p -= 2) line(30, Math.round(py(p)) + .5, 947, Math.round(py(p)) + .5, '#eeeef0');
for (const y of [444.5, 463.5, 482.5]) line(30, y, 947, y, '#e2d3ec');
for (const x of months) {
  line(x, 52, x, 423, '#eeeef0');
  line(x, 425, x, 497, '#e5d7ef');
}
text(346, 239, 'UKOIL, 240', 'mark m1');
text(371, 275, 'BRENT CRUDE OIL', 'mark m2');
for (const [x, w, c] of events) line(x, 52, x, 423, c, w);

/* trend lines: soft inside the channels, full colour outside */
for (const [x1, y1, x2, y2, o] of [
  [273, 153, 758, 233, .75], [30, 112.5, 273, 153, 1], [758, 233, 775, 236, 1],
  [200, 397.6, 698, 196, .75], [167, 411, 200, 397.6, 1]])
  line(x1, y1, x2, y2, '#fa2a30', 1.3, { 'stroke-opacity': o });

/* price bars */
let bars = '';
let prev = null;
for (const [x, y] of sample(price, 1.1, 7)) {
  const up = 1 + rnd() * 3.5, dn = 1 + rnd() * 3.5;
  bars += `M${x.toFixed(1)} ${(y - up).toFixed(1)}V${(y + dn).toFixed(1)}`;
  if (prev) bars += `M${prev[0].toFixed(1)} ${prev[1].toFixed(1)}L${x.toFixed(1)} ${y.toFixed(1)}`;
  prev = [x, y];
}
add('clipPath', { id: 'early' });
plot.lastChild.innerHTML = '<rect x="30" y="52" width="35" height="371"/>';
add('path', { d: bars, stroke: '#1a1522', 'stroke-opacity': .75, 'stroke-width': .65, fill: 'none' });
add('path', { d: bars, stroke: '#000', 'stroke-width': .7, fill: 'none', 'clip-path': 'url(#early)' });
line(639, 196, 639, 200, '#e33', 1.2);
line(30, 197.5, 947, 197.5, '#222', 1, { 'stroke-dasharray': '2 1' });
line(30, 97.5, 947, 97.5, '#ccc', 1, { 'stroke-dasharray': '2 1' });
line(322.5, 52, 322.5, 497, '#ccc', 1, { 'stroke-dasharray': '2 1' });

/* parallel channels */
for (const [x1, x2, a1, a2, b1, b2] of [
  [65, 757, 175.5, 99, 254.5, 179], [46, 758, 256.5, 179, 335.5, 258.5], [61, 773, 334, 257, 413.5, 336]]) {
  add('polygon', { points: `${x1},${a1} ${x2},${a2} ${x2},${b2} ${x1},${b1}`, fill: '#4b239b', 'fill-opacity': .2 });
  line(x1, a1, x2, a2, '#9b6cc0', 1, { 'stroke-opacity': .75 });
  line(x1, b1, x2, b2, '#9b6cc0', 1, { 'stroke-opacity': .75 });
}

/* Fibonacci levels */
for (const [x1, x2, y, c, s] of [
  [613, 652, 177.5, '#4a42d6', '1.618(56.74)'], [613, 652, 188.5, '#888', '1(55.24)'],
  [613, 652, 206.5, '#888', '0(52.81)'], [613, 652, 202, '#e0303e', '0.236(53.38)'],
  [705, 743, 188, '#888', '1(55.30)'], [705, 743, 203.5, '#3f96d2', '0.786(53.30)'],
  [705, 743, 214.5, '#21c592', '0.618(51.72)'], [705, 743, 258, '#888', '0(45.92)']]) {
  line(x1, y, x2, y, c, 1.6);
  text(x1 - 1, y + 2.5, s, 'fib', { style: `fill:${c}` });
}

/* RSI */
line(30, 425.5, 947, 425.5, '#c9b8d4', 1, { 'stroke-dasharray': '2 1' });
add('polyline', { points: sample(rsi, 0.9, 4).map(p => p.map(v => v.toFixed(1)).join()).join(' '), fill: 'none', stroke: '#9a3fb2', 'stroke-width': .9 });
line(481, 436.300, 695, 451, '#fb1230', 1.7);

/* price scale */
rect(948, 52, 25, 455, '#fff');
for (let p = 72; p >= 24; p -= 2) {
  const y = py(p);
  line(947, y, 949, y, '#777');
  text(950, y + 2.2, p.toFixed(2));
}
for (const [y, s] of [[425.5, '70.0000'], [444.5, '60.0000'], [463.5, '50.0000'], [482.5, '40.0000']]) {
  line(947, y, 949, y, '#777');
  text(950, y + 2.2, s);
}
line(947.5, 52, 947.5, 497, '#888');
line(30, 423.5, 973, 423.5, '#999');
line(30, 497.300, 947, 497.300, '#999');
rect(938, 94, 8, 8, '#555');
text(942, 100, '+', 'mid inv');
rect(947, 94, 20, 8, '#555');
text(950, 100, '67.44', 'inv');
rect(947, 193, 20, 9, '#000');
text(950, 199.5, '54.11', 'inv');
rect(949, 202, 18, 8, '#000');
text(950, 208.3, '14:19', 'inv');

/* time scale */
for (const [x, s, b] of [[92, 'Ноя'], [133, 'Дек'], [175, '2016', 1], [215, '13:00'], [254, 'Мар'], [422, 'Июл'], [506, 'Сен'], [548, 'Окт'], [589, 'Ноя'], [674, '2017', 1], [716, 'Фев'], [757, '2'], [799, 'Апр']]) {
  line(x, 497, x, 499, '#777');
  text(x, 505, s, b ? 'mid year' : 'mid');
}
for (const [x, s, w = 57] of [[30, '2015-10-07 13:00:00'], [283, '2016-04-12 01:00:00'], [361, '2016-06-08 01:00:00'], [449, '2016-08-11 05:00:00'], [590, '2016-11-22 09:00:00']]) {
  rect(x, 497, w, 10, '#74c8d6');
  text(x + w / 2, 504.5, s, 'stamp');
}
rect(294, 497, 57, 10, '#4d4d4d');
text(322.5, 504.5, '2016-04-20 09:00:00', 'stamp pale');
```
